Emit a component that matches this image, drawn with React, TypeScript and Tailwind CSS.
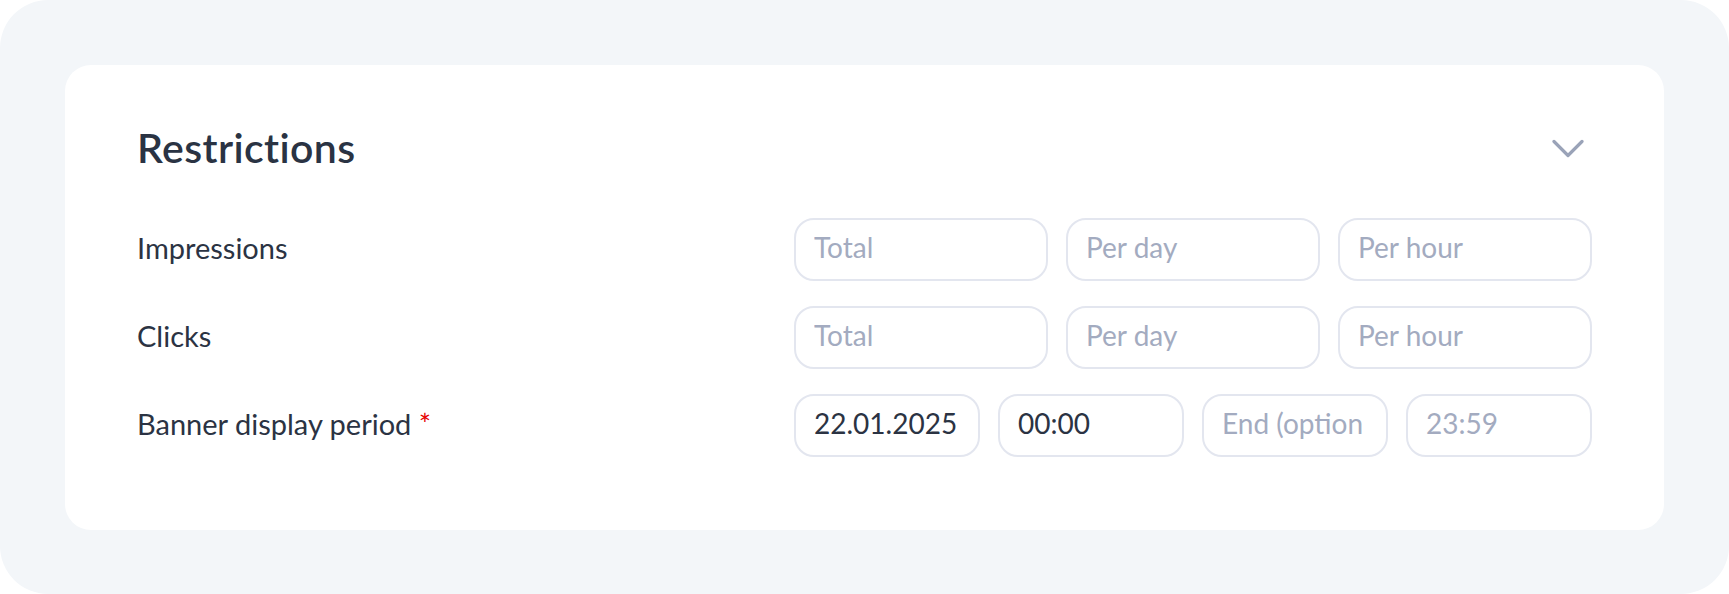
import clsx from "clsx";

const rows = [
	{ label: "Impressions", fields: [{ ph: "Total" }, { ph: "Per day" }, { ph: "Per hour" }] },
	{ label: "Clicks", fields: [{ ph: "Total" }, { ph: "Per day" }, { ph: "Per hour" }] },
];

const Field = ({ placeholder, value, wide }: { placeholder?: string; value?: string; wide?: boolean }) => (
	<input
		type="text"
		defaultValue={value}
		placeholder={placeholder}
		className={clsx(
			"h-[63px] w-full min-w-0 rounded-[20px] border-2 border-[#e3e6ef] bg-white pb-[5px] pl-[18px] text-[28px] text-[#2b3343] outline-none placeholder:text-[#a3abc0]",
			wide ? "pr-[23px]" : "pr-[10px]"
		)}
	/>
);

export default function App() {
	return (
		<div className="bg-white">
			<div
				className="h-[594px] w-full rounded-[48px] bg-[#f3f6f9] p-[65px]"
				style={{ fontFamily: "Lato, 'Noto Sans', sans-serif" }}
			>
				<div className="flex flex-col rounded-[26px] bg-white px-[72px] pt-[59px] pb-[73px]">
					{/* Header */}
					<div className="flex h-[48px] items-center justify-between">
						<h2 className="text-[41px] leading-[48px] font-semibold tracking-[0.4px] text-[#2a3343]">Restrictions</h2>
						<button className="flex h-[48px] w-[48px] items-center justify-center text-[#9aa3b8]">
							<svg width="32" height="19" viewBox="0 0 32 19" fill="none">
								<polyline
									points="2,2.5 16,16.5 30,2.5"
									stroke="currentColor"
									strokeWidth="3.2"
									strokeLinecap="round"
									strokeLinejoin="round"
								/>
							</svg>
						</button>
					</div>

					{/* Rows */}
					<div className="mt-[46px] flex flex-col gap-[25px]">
						{rows.map((row) => (
							<div key={row.label} className="flex items-center justify-between">
								<span className="pb-[4px] text-[29px] text-[#2b3343]">{row.label}</span>
								<div className="grid w-[798px] grid-cols-3 gap-[18px]">
									{row.fields.map((f, i) => (
										<Field key={i} placeholder={f.ph} />
									))}
								</div>
							</div>
						))}
						<div className="flex items-center justify-between">
							<span className="pb-[4px] text-[29px] text-[#2b3343]">
								Banner display period <span className="text-[#e60000]">*</span>
							</span>
							<div className="grid w-[798px] grid-cols-4 gap-[18px]">
								<Field value="22.01.2025" />
								<Field value="00:00" />
								<Field placeholder="End (optional)" wide />
								<Field placeholder="23:59" />
							</div>
						</div>
					</div>
				</div>
			</div>
		</div>
	);
}
